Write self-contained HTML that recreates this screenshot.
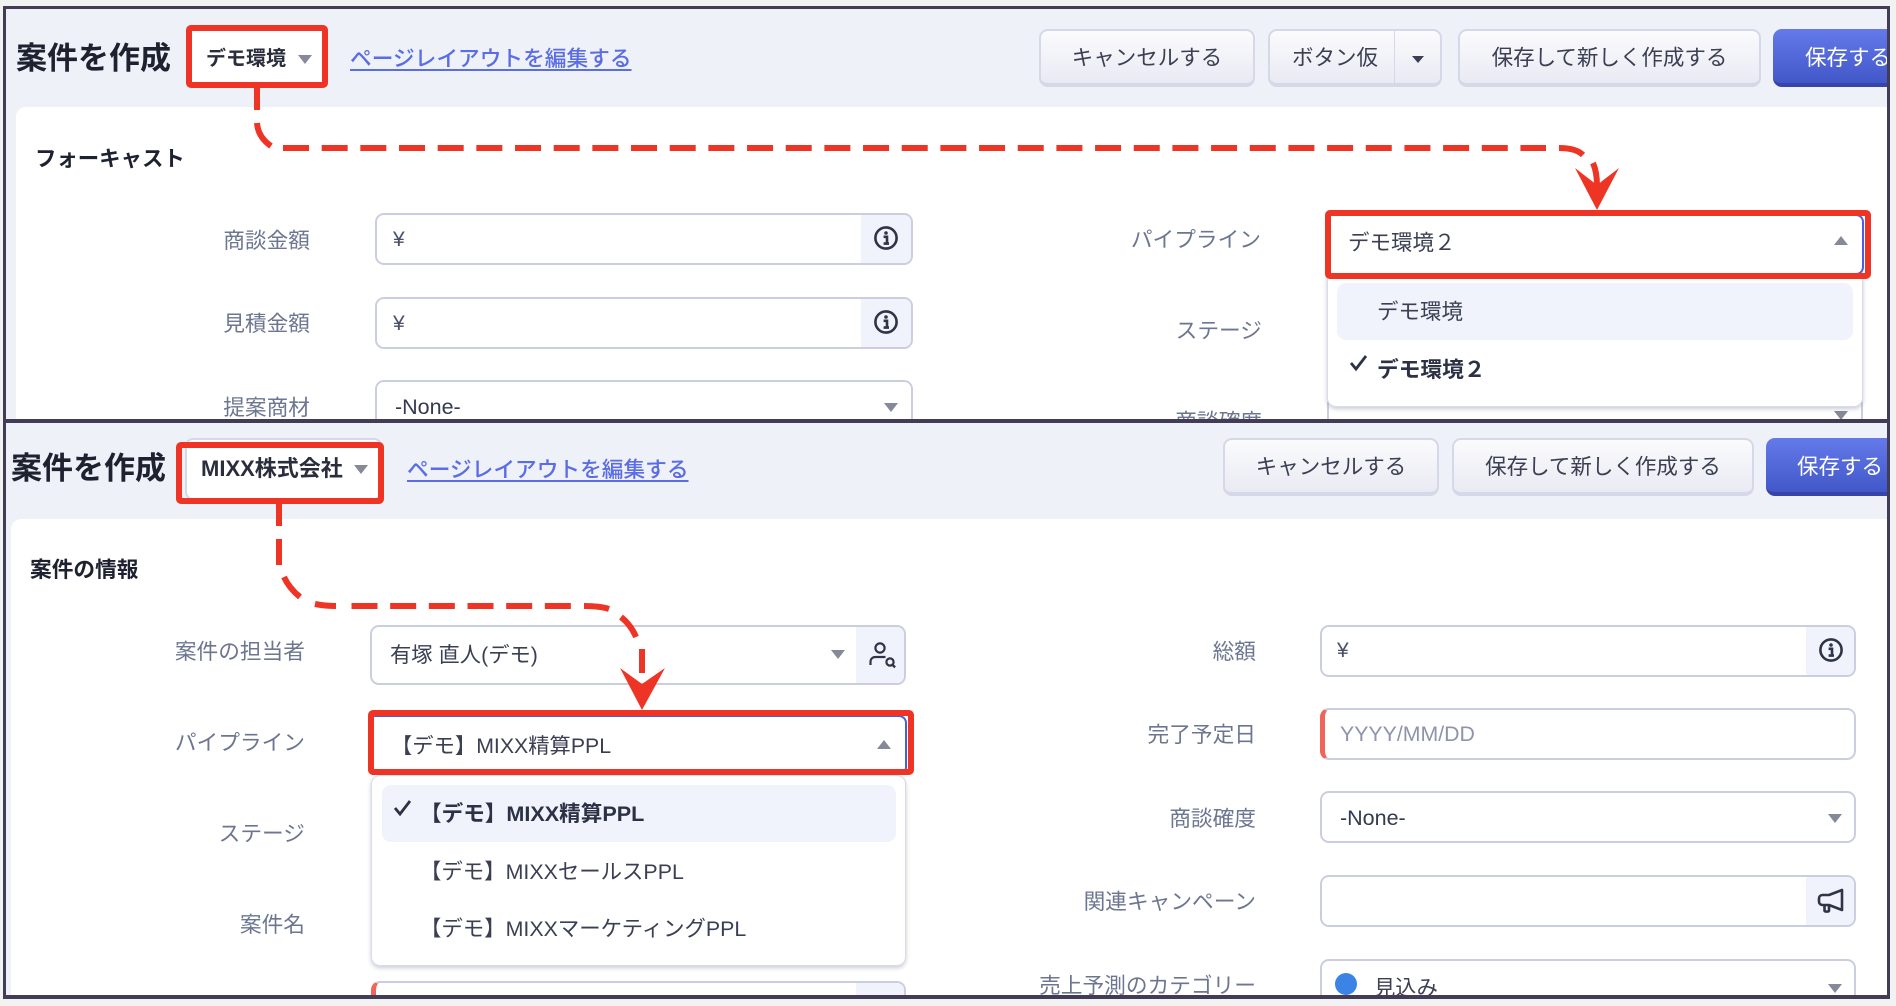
<!DOCTYPE html>
<html lang="ja"><head><meta charset="utf-8">
<style>
html,body{margin:0;padding:0;background:#f1f3f3;width:1896px;height:1006px;overflow:hidden;}
body{position:relative;font-family:"Liberation Sans","Noto Sans CJK JP",sans-serif;color:#2c3145;}
.clip{position:absolute;left:0;top:0;width:1896px;height:1006px;overflow:hidden;}
.a{position:absolute;box-sizing:border-box;}
.t{position:absolute;white-space:nowrap;line-height:30px;height:30px;font-size:21px;}
.l{position:absolute;white-space:nowrap;line-height:30px;height:30px;font-size:21.7px;color:#6c7690;text-align:right;}
.h1{font-size:31px;font-weight:700;color:#1e2230;line-height:40px;height:40px;}
.b{font-weight:700;}
.link{color:#5a6ce6;font-weight:500;font-size:21.7px;text-decoration:underline;text-underline-offset:3px;}
.inp{position:absolute;box-sizing:border-box;background:#fff;border:2px solid #cbcedf;border-radius:9px;overflow:hidden;}
.ic{position:absolute;top:0;bottom:0;right:0;width:48px;background:#f0f3fc;}
.ic.w{width:50px;}
.btn{position:absolute;box-sizing:border-box;border:2px solid #d5d8e6;border-bottom-width:4px;border-radius:9px;background:linear-gradient(#fbfbfd,#e9eaf3);text-align:center;color:#3a3f52;font-size:21.5px;}
.pri{position:absolute;box-sizing:border-box;border-radius:9px;border-bottom:4px solid #3546a8;background:linear-gradient(#6479ea,#4257c8);color:#fff;font-size:21.5px;}
.dn{position:absolute;width:0;height:0;border-left:7.5px solid transparent;border-right:7.5px solid transparent;border-top:9px solid #868a98;}
.up{position:absolute;width:0;height:0;border-left:7.5px solid transparent;border-right:7.5px solid transparent;border-bottom:9px solid #868a98;}
.red{position:absolute;box-sizing:border-box;border:6px solid #ee3424;border-radius:5px;}
.menu{position:absolute;box-sizing:border-box;background:#fff;border:1px solid #d9dbe6;border-radius:0 0 9px 9px;box-shadow:0 2px 4px rgba(70,75,110,.28);}
.hl{position:absolute;background:#f0f3fc;border-radius:9px;}
.yen{color:#4a5068;font-size:21px;}
</style></head><body>

<!-- TOP PANEL -->
<div class="clip" style="clip-path:polygon(6px 9px,1887px 9px,1887px 419px,6px 419px);">
<div class="a" style="left:6px;top:9px;width:1881px;height:410px;background:#eef1f8;"></div>
<div class="a" style="left:16px;top:107px;width:1880px;height:320px;background:#fff;border-radius:10px 0 0 0;"></div>

<div class="t h1" style="left:16px;top:39px;">案件を作成</div>
<div class="a" style="left:190px;top:29px;width:134px;height:55px;background:#fff;"></div>
<div class="t b" style="left:206px;top:44px;font-size:20px;color:#2a2e3c;">デモ環境</div>
<div class="dn" style="left:298px;top:55px;"></div>
<div class="t link" style="left:350px;top:44px;">ページレイアウトを編集する</div>

<div class="btn" style="left:1039px;top:29px;width:216px;height:58px;line-height:55px;">キャンセルする</div>
<div class="btn" style="left:1268px;top:29px;width:174px;height:58px;line-height:55px;text-align:left;padding-left:22px;">ボタン仮</div>
<div class="a" style="left:1394px;top:31px;width:1px;height:52px;background:#d5d8e6;"></div>
<div class="a" style="left:1412px;top:56px;width:0;height:0;border-left:6px solid transparent;border-right:6px solid transparent;border-top:7px solid #3a3f52;"></div>
<div class="btn" style="left:1458px;top:29px;width:303px;height:58px;line-height:55px;">保存して新しく作成する</div>
<div class="pri" style="left:1773px;top:29px;width:140px;height:58px;line-height:59px;padding-left:32px;">保存する</div>

<div class="t b" style="left:35px;top:144px;font-size:21.4px;color:#1e2230;">フォーキャスト</div>

<div class="l" style="left:10px;width:300px;top:226px;">商談金額</div>
<div class="inp" style="left:375px;top:213px;width:538px;height:52px;"><div class="ic w"></div></div>
<div class="t yen" style="left:393px;top:225px;">¥</div>
<svg class="a" style="left:873px;top:225px;" width="26" height="26" viewBox="0 0 26 26"><circle cx="13" cy="13" r="10.6" fill="none" stroke="#2f3446" stroke-width="2.6"/><circle cx="13" cy="8" r="1.8" fill="#2f3446"/><path d="M10.600 11.800h3.400v6.400M10.600 18.600h5.400" fill="none" stroke="#2f3446" stroke-width="2.600"/></svg>

<div class="l" style="left:10px;width:300px;top:309px;">見積金額</div>
<div class="inp" style="left:375px;top:297px;width:538px;height:52px;"><div class="ic w"></div></div>
<div class="t yen" style="left:393px;top:309px;">¥</div>
<svg class="a" style="left:873px;top:309px;" width="26" height="26" viewBox="0 0 26 26"><circle cx="13" cy="13" r="10.6" fill="none" stroke="#2f3446" stroke-width="2.6"/><circle cx="13" cy="8" r="1.8" fill="#2f3446"/><path d="M10.600 11.800h3.400v6.400M10.600 18.600h5.400" fill="none" stroke="#2f3446" stroke-width="2.600"/></svg>

<div class="l" style="left:10px;width:300px;top:393px;">提案商材</div>
<div class="inp" style="left:375px;top:380px;width:538px;height:52px;"></div>
<div class="t" style="left:395px;top:392px;font-size:21.5px;color:#343a50;">-None-</div>
<div class="dn" style="left:884px;top:403px;"></div>

<div class="l" style="left:961px;width:300px;top:225px;">パイプライン</div>
<div class="l" style="left:962px;width:300px;top:316px;">ステージ</div>
<div class="l" style="left:962px;width:300px;top:407px;">商談確度</div>
<div class="inp" style="left:1327px;top:395px;width:536px;height:52px;"></div>
<div class="dn" style="left:1834px;top:411px;"></div>

<div class="menu" style="left:1327px;top:270px;width:536px;height:137px;"></div>
<div class="hl" style="left:1337px;top:283px;width:516px;height:57px;"></div>
<div class="t" style="left:1377px;top:297px;font-size:21.5px;color:#3a3f52;">デモ環境</div>
<svg class="a" style="left:1348px;top:353px;" width="21" height="19" viewBox="0 0 21 19"><path d="M3 10l5 6L18 3" fill="none" stroke="#2c3145" stroke-width="2.8"/></svg>
<div class="t b" style="left:1377px;top:355px;font-size:21.7px;color:#2c3145;">デモ環境２</div>

<div class="a" style="left:1329px;top:214px;width:535px;height:61px;background:#fff;border:2px solid #4a5ee0;border-left:0;border-radius:0 8px 8px 0;"></div>
<div class="t" style="left:1348px;top:228px;font-size:21.5px;color:#3a3f52;">デモ環境２</div>
<div class="up" style="left:1834px;top:236px;"></div>
</div>

<!-- BOTTOM PANEL -->
<div class="clip" style="clip-path:polygon(6px 423px,1887px 423px,1887px 995px,6px 995px);">
<div class="a" style="left:6px;top:423px;width:1881px;height:572px;background:#eef1f8;"></div>
<div class="a" style="left:11px;top:519px;width:1885px;height:500px;background:#fff;border-radius:10px 0 0 0;"></div>

<div class="t h1" style="left:11px;top:449px;">案件を作成</div>
<div class="a" style="left:185px;top:438px;width:197px;height:62px;background:#fff;border:2px solid #d5d8e6;border-radius:8px;"></div>
<div class="t b" style="left:201px;top:454px;font-size:22px;color:#2a2e3c;">MIXX株式会社</div>
<div class="dn" style="left:354px;top:465px;"></div>
<div class="t link" style="left:407px;top:455px;">ページレイアウトを編集する</div>

<div class="btn" style="left:1223px;top:438px;width:216px;height:58px;line-height:55px;">キャンセルする</div>
<div class="btn" style="left:1452px;top:438px;width:302px;height:58px;line-height:55px;">保存して新しく作成する</div>
<div class="pri" style="left:1766px;top:438px;width:150px;height:58px;line-height:59px;padding-left:31px;">保存する</div>

<div class="t b" style="left:30px;top:555px;font-size:21.7px;color:#1e2230;">案件の情報</div>

<div class="l" style="left:5px;width:300px;top:637px;">案件の担当者</div>
<div class="inp" style="left:370px;top:625px;width:536px;height:60px;"><div class="ic"></div></div>
<div class="t" style="left:390px;top:640px;font-size:21.3px;color:#3a3f52;">有塚 直人(デモ)</div>
<div class="dn" style="left:831px;top:650px;"></div>
<svg class="a" style="left:866px;top:638px;" width="32" height="32" viewBox="0 0 32 32"><circle cx="14" cy="10" r="4.6" fill="none" stroke="#2f3446" stroke-width="2.2"/><path d="M4.500 27v-3c0-3 2-5 5-5h10" fill="none" stroke="#2f3446" stroke-width="2.2"/><circle cx="24" cy="24" r="3.6" fill="none" stroke="#2f3446" stroke-width="2.2"/><path d="M26.500 26.800l2.600 2.600" stroke="#2f3446" stroke-width="2.4"/></svg>

<div class="l" style="left:5px;width:300px;top:728px;">パイプライン</div>
<div class="l" style="left:5px;width:300px;top:819px;">ステージ</div>
<div class="l" style="left:5px;width:300px;top:910px;">案件名</div>

<div class="a" style="left:372px;top:715px;width:535px;height:60px;background:#fff;border:2px solid #4a5ee0;border-left:0;border-radius:0 8px 8px 0;"></div>
<div class="t" style="left:391px;top:731px;font-size:21.3px;color:#3a3f52;">【デモ】MIXX精算PPL</div>
<div class="up" style="left:877px;top:740px;"></div>

<div class="inp" style="left:371px;top:981px;width:535px;height:52px;border-left:5px solid #f0645a;"><div class="ic"></div></div>

<div class="menu" style="left:371px;top:775px;width:535px;height:191px;border-radius:9px;"></div>
<div class="hl" style="left:382px;top:785px;width:514px;height:57px;"></div>
<svg class="a" style="left:392px;top:798px;" width="21" height="19" viewBox="0 0 21 19"><path d="M3 10l5 6L18 3" fill="none" stroke="#2c3145" stroke-width="2.8"/></svg>
<div class="t b" style="left:420px;top:799px;font-size:21.6px;color:#2c3145;">【デモ】MIXX精算PPL</div>
<div class="t" style="left:420px;top:857px;font-size:21.4px;color:#3a3f52;">【デモ】MIXXセールスPPL</div>
<div class="t" style="left:420px;top:914px;font-size:21.4px;color:#3a3f52;">【デモ】MIXXマーケティングPPL</div>

<div class="l" style="left:956px;width:300px;top:637px;">総額</div>
<div class="inp" style="left:1320px;top:625px;width:536px;height:52px;"><div class="ic"></div></div>
<div class="t yen" style="left:1337px;top:636px;">¥</div>
<svg class="a" style="left:1818px;top:637px;" width="26" height="26" viewBox="0 0 26 26"><circle cx="13" cy="13" r="10.6" fill="none" stroke="#2f3446" stroke-width="2.6"/><circle cx="13" cy="8" r="1.8" fill="#2f3446"/><path d="M10.600 11.800h3.400v6.400M10.600 18.600h5.400" fill="none" stroke="#2f3446" stroke-width="2.600"/></svg>

<div class="l" style="left:956px;width:300px;top:720px;">完了予定日</div>
<div class="inp" style="left:1320px;top:708px;width:536px;height:52px;border-left:5px solid #f0645a;"></div>
<div class="t" style="left:1340px;top:719px;color:#8e94aa;font-size:21.3px;">YYYY/MM/DD</div>

<div class="l" style="left:956px;width:300px;top:804px;">商談確度</div>
<div class="inp" style="left:1320px;top:791px;width:536px;height:52px;"></div>
<div class="t" style="left:1340px;top:803px;font-size:21.5px;color:#343a50;">-None-</div>
<div class="dn" style="left:1828px;top:814px;"></div>

<div class="l" style="left:956px;width:300px;top:887px;">関連キャンペーン</div>
<div class="inp" style="left:1320px;top:875px;width:536px;height:52px;"><div class="ic"></div></div>
<svg class="a" style="left:1816px;top:886px;" width="30" height="30" viewBox="0 0 30 30"><path d="M26 4v20L13 19H6.500C4.500 19 3 17.500 3 15.500v-3C3 10.500 4.500 9 6.500 9H13zM8.500 19v5.500c0 1.500 4.500 1.500 4.500 0V19" fill="none" stroke="#2f3446" stroke-width="2.6" stroke-linejoin="round"/></svg>

<div class="l" style="left:956px;width:300px;top:971px;">売上予測のカテゴリー</div>
<div class="inp" style="left:1320px;top:959px;width:536px;height:52px;"></div>
<div class="a" style="left:1335px;top:973px;width:22px;height:22px;border-radius:50%;background:#3c83e6;"></div>
<div class="t" style="left:1374px;top:973px;font-size:21.3px;color:#3a3f52;">見込み</div>
<div class="dn" style="left:1828px;top:984px;"></div>
</div>

<!-- RED ANNOTATIONS -->
<div class="red" style="left:186px;top:25px;width:142px;height:63px;"></div>
<div class="red" style="left:1325px;top:210px;width:546px;height:69px;"></div>
<div class="red" style="left:176px;top:442px;width:208px;height:62px;"></div>
<div class="red" style="left:368px;top:710px;width:546px;height:65px;"></div>
<svg class="a" style="left:0;top:0;" width="1896" height="1006" viewBox="0 0 1896 1006">
<g fill="none" stroke="#ee3424" stroke-width="6">
<path d="M257 84V110"/>
<path d="M257 123Q258 137 271 146"/>
<path d="M283 148H1546" stroke-dasharray="26 12.67"/>
<path d="M1559 148Q1576 148 1583 155"/>
<path d="M1593 163Q1597 172 1597 186"/>
<path d="M279 500V526"/>
<path d="M279 539V565"/>
<path d="M284 577Q289 588 300 597"/>
<path d="M315 604Q325 606 336 606"/>
<path d="M351.500 606H575" stroke-dasharray="26 12.67"/>
<path d="M584 606Q600 606 609 609"/>
<path d="M621 617Q631 625 636 637"/>
<path d="M642 649V673"/>
</g>
<path d="M1597 210L1575 168L1597 185L1619 168Z" fill="#ee3424"/>
<path d="M642 710L620 668L642 684L665 668Z" fill="#ee3424"/>
</svg>

<!-- FRAME -->
<div class="a" style="left:3px;top:6px;width:1887px;height:3px;background:#443b56;"></div>
<div class="a" style="left:3px;top:6px;width:3px;height:993px;background:#443b56;"></div>
<div class="a" style="left:1887px;top:6px;width:3px;height:993px;background:#443b56;"></div>
<div class="a" style="left:3px;top:419px;width:1887px;height:4px;background:#443b56;"></div>
<div class="a" style="left:3px;top:995px;width:1887px;height:4px;background:#443b56;"></div>
</body></html>
